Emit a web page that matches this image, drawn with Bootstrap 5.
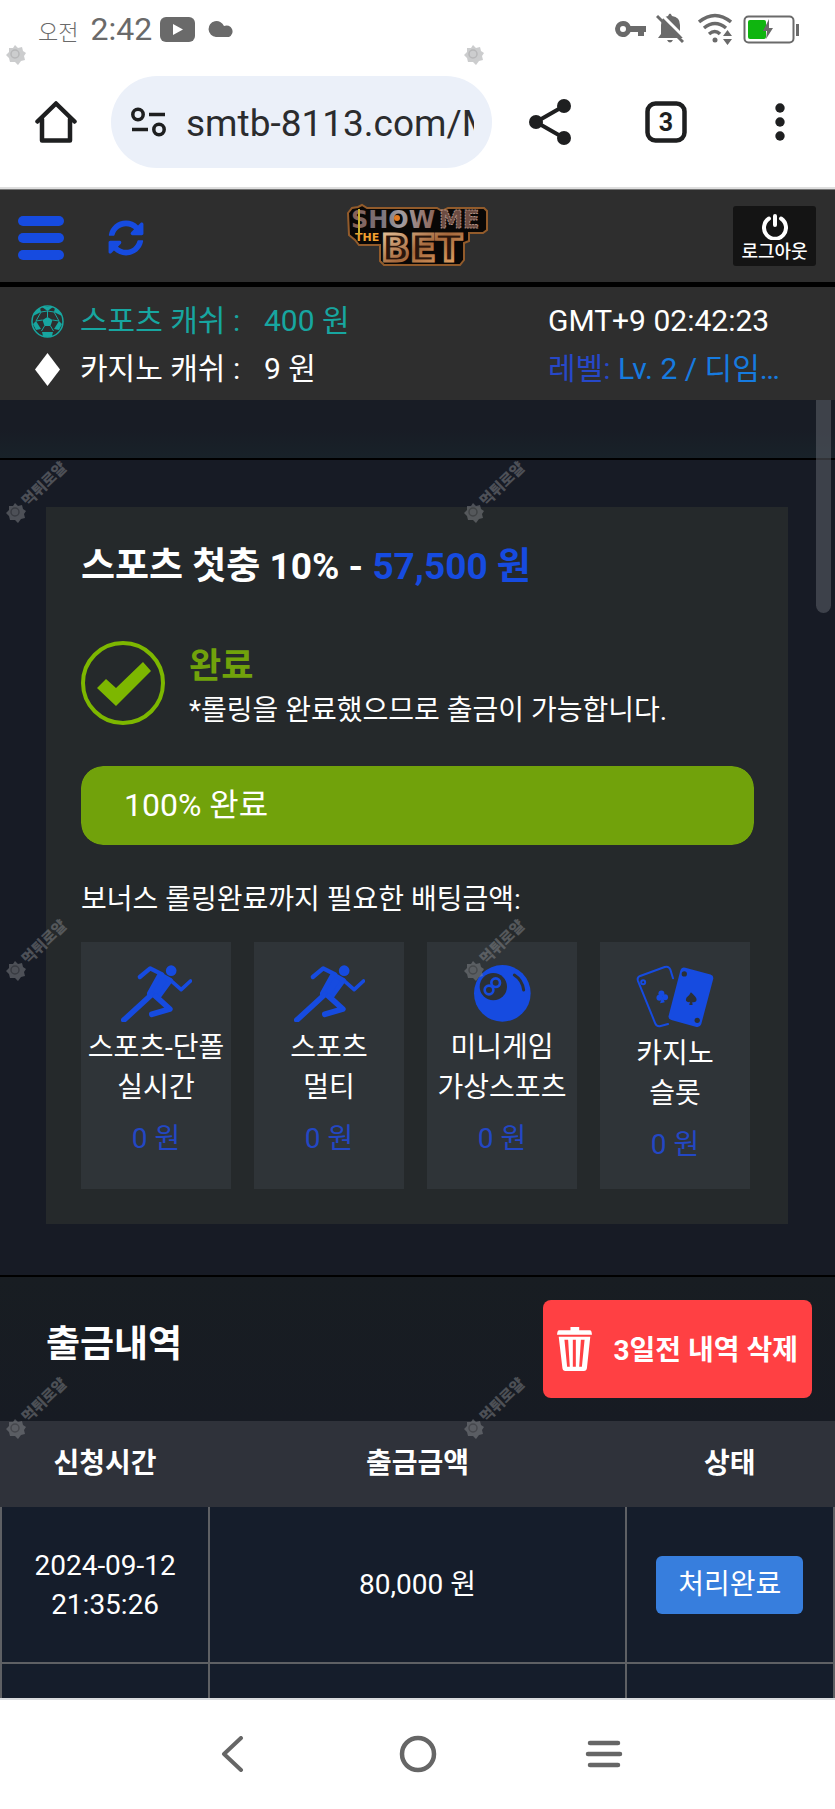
<!DOCTYPE html>
<html lang="ko">
<head>
<meta charset="utf-8">
<meta name="viewport" content="width=device-width, initial-scale=1">
<title>출금내역</title>
<link href="https://cdn.jsdelivr.net/npm/bootstrap@5.3.0/dist/css/bootstrap.min.css" rel="stylesheet">
<style>
:root { --blue: #164be0; --green: #71a20b; }
body { font-family: Roboto, "Noto Sans CJK KR", sans-serif; font-size: 28px; line-height: 40px; color: #fff; background: #fff; overflow-x: hidden; }
svg { display: block; flex: none; }
button { border: 0; background: none; padding: 0; color: inherit; }

/* phone status bar */
.status-bar { height: 60px; padding: 0 36px 2px 38px; color: #6a6a6a; font-size: 32px; }
.status-bar .meridiem { font-size: 22px; font-weight: 300; }

/* browser toolbar */
.toolbar { height: 127px; padding: 16px 0 19px; color: #1e1f20; }
.toolbar > button { flex: none; }
.tool-home { width: 111px; }
.tool-btn { width: 116px; }
.tool-last { width: 111px; }
.address { background: #ebf0f9; border-radius: 46px; padding: 0 18px 0 20px; min-width: 0; }
.address input { font-size: 37px; color: #2b2c2e; background: none; border: 0; padding: 4px 0 0; outline: 0; width: 0; line-height: 48px; }
.page-edge { height: 3px; background: #dedede; border-bottom: 1px solid #777; }

/* site header */
.site-head { height: 97px; background: #2e2e2e; border-bottom: 5px solid #000; padding: 0 19px 0 18px; }
.head-side { flex: 1 1 0; }
.logout { width: 83px; height: 60px; background: #141414; border-radius: 3px; font-size: 18px; font-weight: 500; line-height: 24px; }
.info { background: #2e2e2e; padding: 10px 0 7px 31px; font-size: 30px; line-height: 48px; }
.info .pic { width: 33px; }
.info .cash-name { width: 168px; }
.info .right-col { width: 287px; }
.teal { color: #17a6a0; }
.level { color: #2748c8; }
.level span { color: #167be0; }

/* bonus section */
.band { height: 60px; background: linear-gradient(#181c25 50%, #182229); border-bottom: 2px solid #000; }
.thumb { position: absolute; top: 0; right: 4px; width: 15px; height: 213px; background: #64687080; border-radius: 0 0 8px 8px; z-index: 3; }
.bonus { background: #171b25; padding: 47px 47px 51px 46px; border-bottom: 2px solid #000; }
.panel { background: #25292b; padding: 34px 34px 35px 35px; }
.title { font-size: 37px; font-weight: 700; line-height: 52px; }
.accent { color: var(--blue); }
.done { margin-top: 48px; }
.done-title { font-size: 35px; font-weight: 700; line-height: 48px; padding-top: 2px; color: var(--green); }
.bar { height: 79px; border-radius: 22px; background: transparent; margin-top: 35px; font-size: 32px; }
.bar .progress-bar { background: var(--green); padding-left: 43px; padding-bottom: 2px; border-radius: 22px; }
.need { margin: 35px 0 22px; }
.tiles { display: grid; grid-template-columns: repeat(4, 1fr); gap: 23px; padding-right: 4px; }
.tile { background: #2f3438; height: 247px; padding-top: 23px; white-space: nowrap; }
.tile svg { margin: 0 auto 6px; }
.tile .amount { color: #2347c4; margin-top: 11px; }

/* history */
.history { background: linear-gradient(#181d22, #171b23); height: 144px; padding: 0 23px 0 46px; }
.history .title { padding-bottom: 8px; }
.btn-clear { background: #ff4043; color: #fff; width: 269px; height: 98px; border-radius: 8px; font-weight: 700; padding: 0 14px; }
.log-wrap { background: #2f323a; }
.log { table-layout: fixed; width: 100%; border-collapse: collapse; text-align: center; }
.log th { height: 86px; background: #2f323a; font-weight: 700; padding: 0; }
.log td { background: #151d2b; border: 2px solid #5e6064; padding: 0; height: 156px; line-height: 39px; }
.log tbody tr:first-child td { border-top: 0; }
.log tbody tr:last-child td { height: 35px; border-bottom: 0; }
.btn-state { background: #377edd; color: #fff; border-radius: 6px; width: 147px; height: 58px; }

/* phone navigation */
.phone-nav { height: 111px; background: #fff; border-top: 2px solid #d8dbde; padding-bottom: 2px; }
.phone-nav button { width: 186px; }

/* repeated stamp laid over the page */
.stamps { position: absolute; inset: 0; display: grid; grid-template-columns: 458px 1fr; grid-template-rows: 68px 458px 458px 458px; pointer-events: none; overflow: hidden; z-index: 5; color: #8f9195; opacity: .45; }
.stamp { width: 70px; height: 70px; align-self: end; justify-self: start; }
</style>
</head>
<body class="position-relative">

<svg width="0" height="0" class="position-absolute" aria-hidden="true">
  <defs>
    <g id="badge"><path d="M15 47l3 3 4-1 1 4 3 2-2 3 1 4-4 1-3 4-3-3-5 0-1-4-3-3 3-3 0-4 4 0z" fill="currentColor"/><circle cx="15" cy="56" r="4" fill="none" stroke="#333" stroke-opacity=".5" stroke-width="1.500"/></g>
    <symbol id="stamp" viewBox="0 0 70 70"><use href="#badge"/><text transform="translate(28 51) rotate(-44)" font-size="15" font-weight="900" fill="currentColor">먹튀로얄</text></symbol>
    <symbol id="runner" viewBox="0 0 212 171"><g fill="none" stroke="#164be0" stroke-linecap="round" stroke-linejoin="round"><circle cx="150" cy="17" r="16" fill="#164be0" stroke="none"/><path d="M56 36L87 10l36 18" stroke-width="13"/><path d="M146 44l34 30 28-26" stroke-width="11"/><path d="M116 28l32 18-36 50-28-10z" fill="#164be0" stroke-width="14"/><path d="M90 90L8 165" stroke-width="17"/><path d="M104 94l42 38-54 16" stroke-width="17"/></g></symbol>
  </defs>
</svg>

<div class="status-bar d-flex align-items-center">
  <span class="meridiem me-2 pt-2">오전</span><span class="ms-1">2:42</span>
  <svg class="ms-2" width="35" height="25" viewBox="0 0 35 25"><rect width="35" height="25" rx="6" fill="#6a6a6a"/><path d="M13 7v11l10-5.500z" fill="#fff"/></svg>
  <svg style="margin-left:13px" width="28" height="18" viewBox="0 0 28 18"><path d="M8 17a8 8 0 1 1 8-11 6 6 0 1 1 5 11z" fill="#6a6a6a"/></svg>
  <div class="d-flex align-items-center ms-auto">
    <svg width="31" height="18" viewBox="0 0 31 18"><path fill-rule="evenodd" d="M8 1a8 8 0 0 1 7.500 5H31v6h-2v4h-6v-4h-7.500A8 8 0 1 1 8 1zm0 5a3 3 0 1 0 0 6 3 3 0 0 0 0-6z" fill="#6a6a6a"/></svg>
    <svg style="margin-left:10px" width="28" height="32" viewBox="0 0 28 32"><path d="M2 25l3-4V12q0-8 7-9 2-5 4 0 8 1 8 9v9l3 4zM11 27h6q-3 5-6 0z" fill="#6a6a6a"/><path d="M4 0l26 26" stroke="#fff" stroke-width="3"/><path d="M1 3l26 26" stroke="#6a6a6a" stroke-width="3"/></svg>
    <svg style="margin-left:14px" width="34" height="33" viewBox="0 0 34 33"><g fill="none" stroke="#6a6a6a" stroke-width="3.500"><path d="M1 9q16-13 32 0M6 15q11-9 22 0M11 21q6-5 11 0"/></g><circle cx="17" cy="27" r="2.500" fill="#6a6a6a"/><path d="M25 23l4.500-6 4.500 6zM25 26h9l-4.500 6z" fill="#6a6a6a"/></svg>
    <svg style="margin-left:11px" width="56" height="29" viewBox="0 0 56 29"><rect x="1.500" y="1.500" width="49" height="26" rx="4" fill="none" stroke="#6a6a6a" stroke-width="2"/><rect x="5" y="5" width="18" height="19" rx="2" fill="#0fb50f"/><path d="M26 4l-6 12h4l-1 8 7-11h-4z" fill="#6a6a6a"/><path d="M53 9h3v12h-3z" fill="#6a6a6a"/></svg>
  </div>
</div>

<div class="toolbar d-flex">
  <button class="tool-home d-flex align-items-center justify-content-center" aria-label="홈"><svg width="42" height="44" viewBox="0 0 42 44" fill="none" stroke="#1e1f20" stroke-width="4.500" stroke-linejoin="round" stroke-linecap="round"><path d="M2.500 21.500L21 3.500l18.500 18"/><path d="M7 19v21.500h28V19"/></svg></button>
  <div class="address d-flex align-items-center flex-grow-1">
    <svg width="35" height="30" viewBox="0 0 35 30" fill="none" stroke="#1e1f20" stroke-width="3.500"><circle cx="7" cy="7.500" r="5.200"/><path d="M18 7.500h16M1 22.500h16"/><circle cx="28" cy="22.500" r="5.200"/></svg>
    <input class="flex-grow-1" style="margin-left:20px" type="text" aria-label="주소" value="smtb-8113.com/M">
  </div>
  <button class="tool-btn d-flex align-items-center justify-content-center" aria-label="공유"><svg width="42" height="46" viewBox="0 0 42 46" fill="#1e1f20"><path d="M35 7L7 23l28 16" fill="none" stroke="#1e1f20" stroke-width="4"/><circle cx="35" cy="7" r="7"/><circle cx="7" cy="23" r="7"/><circle cx="35" cy="39" r="7"/></svg></button>
  <button class="tool-btn d-flex align-items-center justify-content-center" aria-label="탭 3개"><svg width="42" height="42" viewBox="0 0 42 42"><rect x="2.500" y="2.500" width="37" height="37" rx="8" fill="none" stroke="#1e1f20" stroke-width="4.500"/><text x="21" y="30" text-anchor="middle" font-size="25" font-weight="700" fill="#1e1f20">3</text></svg></button>
  <button class="tool-last d-flex align-items-center justify-content-center" aria-label="메뉴"><svg width="10" height="38" viewBox="0 0 10 38" fill="#1e1f20"><circle cx="5" cy="5" r="4.700"/><circle cx="5" cy="19" r="4.700"/><circle cx="5" cy="33" r="4.700"/></svg></button>
</div>
<div class="page-edge"></div>

<header class="site-head d-flex align-items-center">
  <div class="head-side d-flex align-items-center pt-1">
    <button aria-label="메뉴 열기"><svg width="46" height="44" viewBox="0 0 46 44" fill="#164be0"><rect width="46" height="10" rx="5"/><rect y="17" width="46" height="10" rx="5"/><rect y="34" width="46" height="10" rx="5"/></svg></button>
    <button style="margin-left:44px" aria-label="새로고침"><svg width="36" height="36" viewBox="0 0 512 512"><path fill="#164be0" d="M370.720 133.280C339.458 104.008 298.888 87.962 255.848 88c-77.458.068-144.328 53.178-162.791 126.850-1.344 5.363-6.122 9.150-11.651 9.150H24.103c-7.498 0-13.194-6.807-11.807-14.176C33.933 94.924 134.813 8 256 8c66.448 0 126.791 26.136 171.315 68.685L463.030 40.970C478.149 25.851 504 36.559 504 57.941V192c0 13.255-10.745 24-24 24H345.941c-21.382 0-32.090-25.851-16.971-40.971l41.750-41.749zM32 296h134.059c21.382 0 32.090 25.851 16.971 40.971l-41.750 41.750c31.262 29.273 71.835 45.319 114.876 45.280 77.418-.070 144.315-53.144 162.787-126.849 1.344-5.363 6.122-9.150 11.651-9.150h57.304c7.498 0 13.194 6.807 11.807 14.176C478.067 417.076 377.187 504 256 504c-66.448 0-126.791-26.136-171.315-68.685L48.970 471.030C33.851 486.149 8 475.441 8 454.059V320c0-13.255 10.745-24 24-24z"/></svg></button>
  </div>
  <a href="#" aria-label="SHOW ME THE BET"><svg width="142" height="64" viewBox="0 0 142 64" overflow="visible">
    <defs><linearGradient id="gold" x2="1" y2="1"><stop stop-color="#f0cfa8"/><stop offset=".5" stop-color="#a5683c"/><stop offset="1" stop-color="#f0b070"/></linearGradient><linearGradient id="steel" x2="1"><stop stop-color="#8a5f52"/><stop offset=".35" stop-color="#77707a"/><stop offset=".6" stop-color="#a29ca0"/><stop offset="1" stop-color="#8c6558"/></linearGradient></defs>
    <path d="M2 9l4-5 6-1 4-2 5 3 70 0 5 3 6-3h36l3 3v19l-4 3h-14v8l-5 2v17l-4 5H38l-4-4V41H13l-4-5-6-5z" fill="#090706" stroke="#925b2b" stroke-width="2"/>
    <g font-family="DejaVu Sans, sans-serif" font-weight="700"><text x="5" y="24" font-size="24" fill="url(#steel)">SHOW</text><text x="93" y="24" font-size="24" fill="#6c4c42" stroke="#b09084" stroke-width="1" stroke-dasharray="2 1">ME</text><text x="9" y="37" font-size="11" fill="#f0a030">THE</text><text x="35" y="57" font-size="38" fill="#2b160c" stroke="url(#gold)" stroke-width="3">BET</text></g>
    <path d="M13 5v26" stroke="#c8b030" stroke-width="2"/><circle cx="51" cy="14" r="3" fill="#e27a22"/>
  </svg></a>
  <div class="head-side d-flex justify-content-end">
    <button class="logout d-flex flex-column align-items-center justify-content-center pt-1">
      <svg width="26" height="27" viewBox="0 0 26 27" fill="none" stroke="#fff" stroke-width="4" stroke-linecap="round"><path d="M7 5.500a11 11 0 1 0 12 0M13 3v9"/></svg>
      <span>로그아웃</span>
    </button>
  </div>
</header>

<div class="info d-flex justify-content-between">
  <div>
    <div class="teal d-flex align-items-center"><span class="pic"><svg width="33" height="33" viewBox="0 0 33 33"><circle cx="16.500" cy="16.500" r="15.500" fill="none" stroke="#17a6a0" stroke-width="1.500"/><path d="M11 2h11l-5.500 4zM2 11l8-4-1-4Q3 6 2 11zM31 11l-8-4 1-4q6 3 7 8zM2 19l3 6 5-1-5-8zM31 19l-3 6-5-1 5-8zM12 31l-1-4h11l-1 4q-4 2-9 0zM11.500 15l5-3 5 3-2 6h-6z" fill="#17a6a0"/><path d="M16.500 6v6M5 16l6.500-1M28 16l-6.500-1M13.500 21l-3 5M19.500 21l3 5M10 7l6.500-1L23 7M10 7l-5 9M23 7l5 9" stroke="#17a6a0" fill="none"/></svg></span><span class="cash-name ms-3">스포츠 캐쉬 :</span><span class="ms-3">400 원</span></div>
    <div class="d-flex align-items-center"><span class="pic"><svg class="mx-auto" width="25" height="33" viewBox="0 0 25 33"><path d="M12.500 0L25 16.500 12.500 33 0 16.500z" fill="#fff"/></svg></span><span class="cash-name ms-3">카지노 캐쉬 :</span><span class="ms-3">9 원</span></div>
  </div>
  <div class="right-col">
    <div>GMT+9 02:42:23</div>
    <div class="level">레벨: <span>Lv. 2 / 디임…</span></div>
  </div>
</div>

<main class="position-relative">
  <div class="thumb"></div>
  <div class="band"></div>
  <section class="bonus">
    <div class="panel">
      <h1 class="title mb-0">스포츠 첫충 10% - <span class="accent">57,500 원</span></h1>
      <div class="done d-flex align-items-start">
        <svg width="84" height="84" viewBox="0 0 84 84"><circle cx="42" cy="42" r="40" fill="none" stroke="#7db700" stroke-width="4"/><path d="M16 47l9-9 10 9 27-26 8 9-35 35z" fill="#7db700"/></svg>
        <div class="ms-4">
          <h2 class="done-title mb-0">완료</h2>
          <div>*롤링을 완료했으므로 출금이 가능합니다.</div>
        </div>
      </div>
      <div class="bar progress" role="progressbar" aria-label="롤링" aria-valuenow="100" aria-valuemin="0" aria-valuemax="100"><div class="progress-bar text-start" style="width:100%">100% 완료</div></div>
      <p class="need">보너스 롤링완료까지 필요한 배팅금액:</p>
      <div class="tiles text-center">
        <div class="tile"><svg width="71" height="57"><use href="#runner"/></svg><div>스포츠-단폴<br>실시간</div><div class="amount">0 원</div></div>
        <div class="tile"><svg width="71" height="57"><use href="#runner"/></svg><div>스포츠<br>멀티</div><div class="amount">0 원</div></div>
        <div class="tile"><svg width="57" height="57" viewBox="0 0 171 171"><circle cx="85" cy="85" r="85" fill="#164be0"/><circle cx="58" cy="65" r="41" fill="#2b3036"/><g fill="none" stroke="#164be0" stroke-width="8"><circle cx="65" cy="53" r="13"/><circle cx="45" cy="75" r="13"/></g><path d="M121 30q24 15 28 45" fill="none" stroke="#2b3036" stroke-width="9" stroke-linecap="round"/></svg><div>미니게임<br>가상스포츠</div><div class="amount">0 원</div></div>
        <div class="tile"><svg width="78" height="63" viewBox="0 0 234 190"><g fill="none" stroke="#164be0" stroke-width="6" stroke-linecap="round"><path d="M111 40L103 14Q98 2 86 6L12 33Q2 37 5 47l52 128q5 12 17 9l22-6"/><circle cx="21" cy="52" r="6"/></g><g fill="#164be0"><circle cx="76" cy="86" r="9"/><circle cx="70" cy="99" r="9"/><circle cx="87" cy="97" r="9"/><path d="M79 94l7 18-14 3z"/><path d="M148 8l76 21q11 4 8 14l-36 136q-4 10-14 8l-76-21q-11-4-8-14L133 17q4-12 15-9z"/></g><g fill="#2b3036"><path d="M165 82q-2 6-13 16-6 12 5 14l5-1-2 10h10l-1-9q13 2 13-8 0-8-17-22z"/><circle cx="145" cy="27" r="8"/><circle cx="184" cy="167" r="8"/></g></svg><div>카지노<br>슬롯</div><div class="amount">0 원</div></div>
      </div>
    </div>
  </section>

  <section class="log-wrap">
    <div class="history d-flex align-items-center justify-content-between">
      <h2 class="title mb-0">출금내역</h2>
      <button class="btn-clear d-flex align-items-center justify-content-between">
        <svg width="35" height="44" viewBox="0 0 104 131"><path d="M40 0h26v10h32q5 0 6 13H0Q1 10 6 10h34z" fill="#fff"/><path fill-rule="evenodd" d="M5 29h94L89 122q-1 9-9 9H25q-8 0-9-9zM22 38l8 80h8l-5-80zM47 38v80h9V38zM71 38l-5 80h8l8-80z" fill="#fff"/></svg>
        <span class="pt-1">3일전 내역 삭제</span>
      </button>
    </div>
    <table class="log">
      <colgroup><col style="width:25%"><col style="width:50%"><col style="width:25%"></colgroup>
      <thead><tr><th scope="col">신청시간</th><th scope="col">출금금액</th><th scope="col">상태</th></tr></thead>
      <tbody>
        <tr><td>2024-09-12<br>21:35:26</td><td>80,000 원</td><td><button class="btn-state">처리완료</button></td></tr>
        <tr><td></td><td></td><td></td></tr>
      </tbody>
    </table>
  </section>
</main>

<nav class="phone-nav d-flex align-items-center justify-content-center" aria-label="시스템 탐색">
  <button aria-label="뒤로"><svg class="mx-auto" width="24" height="36" viewBox="0 0 24 36"><path d="M21 2L4 18l17 16" fill="none" stroke="#666" stroke-width="4" stroke-linecap="round" stroke-linejoin="round"/></svg></button>
  <button aria-label="홈 화면"><svg class="mx-auto" width="38" height="38" viewBox="0 0 38 38"><circle cx="19" cy="19" r="16" fill="none" stroke="#666" stroke-width="4.500"/></svg></button>
  <button aria-label="최근 앱"><svg class="mx-auto" width="38" height="28" viewBox="0 0 38 28" stroke="#666" stroke-width="4.500" stroke-linecap="round"><path d="M5 3h28M3 14h32M5 25h28"/></svg></button>
</nav>

<div class="stamps" aria-hidden="true">
  <svg class="stamp"><use href="#badge"/></svg><svg class="stamp"><use href="#badge"/></svg>
  <svg class="stamp"><use href="#stamp"/></svg><svg class="stamp"><use href="#stamp"/></svg>
  <svg class="stamp"><use href="#stamp"/></svg><svg class="stamp"><use href="#stamp"/></svg>
  <svg class="stamp"><use href="#stamp"/></svg><svg class="stamp"><use href="#stamp"/></svg>
</div>
<script src="https://cdn.jsdelivr.net/npm/bootstrap@5.3.0/dist/js/bootstrap.bundle.min.js"></script>
</body>
</html>
